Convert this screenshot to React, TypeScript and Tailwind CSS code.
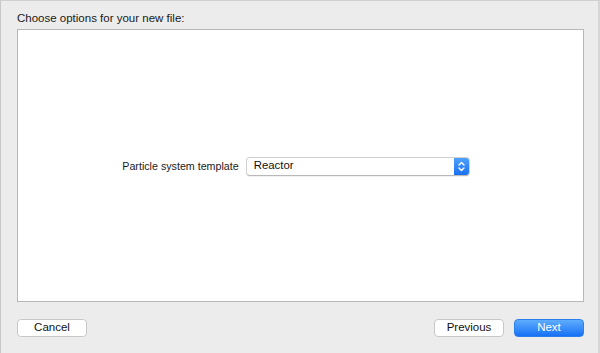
export default function App() {
  return (
    <div
      className="w-[600px] h-[353px] bg-[#ececec] flex flex-col border-l border-l-[#c8c8c8] border-r-2 border-r-[#d6d6d6] border-t border-t-[#d0d0d0] overflow-hidden"
      style={{ fontFamily: '"Liberation Sans", Arial, sans-serif' }}
    >
      <div className="pl-[16px] pt-[10px] h-[28px] text-[11.5px] text-[#1a1a1a] leading-[14px]">
        Choose options for your new file:
      </div>
      <div className="ml-[16px] mr-[14px] h-[273px] bg-white border border-[#b8b8b8] flex items-center justify-center pr-[9px]">
        <div className="flex items-center gap-[7px] mt-[1px]">
          <span className="text-[10.7px] text-[#1a1a1a]">Particle system template</span>
          <div className="w-[224px] h-[19px] rounded-[4px] bg-white border border-[#d0d0d0] border-b-[#b8b8b8] shadow-[0_1px_0_rgba(0,0,0,0.05)] flex items-center justify-between overflow-hidden">
            <span className="pl-[7px] text-[11.4px] text-[#111]">Reactor</span>
            <div className="w-[15px] h-full bg-gradient-to-b from-[#4ea1fb] to-[#1a6ff2] flex items-center justify-center">
              <svg width="9" height="13" viewBox="0 0 9 13" fill="none" stroke="white" strokeWidth="1.4" strokeLinecap="round" strokeLinejoin="round">
                <path d="M2 5 L4.5 2.5 L7 5" />
                <path d="M2 8 L4.5 10.5 L7 8" />
              </svg>
            </div>
          </div>
        </div>
      </div>
      <div className="flex items-center justify-between pl-[16px] pr-[14px] mt-[17px]">
        <button className="w-[70px] h-[18px] rounded-[4px] bg-white border border-[#c8c8c8] text-[11.5px] text-[#111] leading-none">
          Cancel
        </button>
        <div className="flex gap-[10px]">
          <button className="w-[70px] h-[18px] rounded-[4px] bg-white border border-[#c8c8c8] text-[11.5px] text-[#111] leading-none">
            Previous
          </button>
          <button className="w-[70px] h-[18px] rounded-[4px] bg-gradient-to-b from-[#5eadfd] to-[#1470f5] border border-[#2d7ef0] text-[11.5px] text-white leading-none">
            Next
          </button>
        </div>
      </div>
    </div>
  );
}
